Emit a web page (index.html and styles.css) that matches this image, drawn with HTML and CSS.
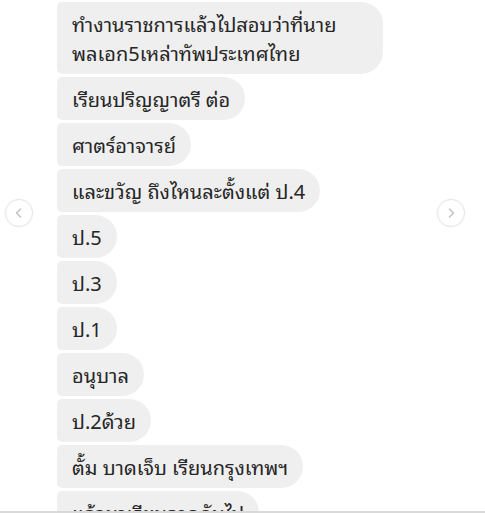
FILE: index.html
```html
<!DOCTYPE html>
<html lang="th">
<head>
<meta charset="utf-8">
<link rel="stylesheet" href="styles.css">
</head>
<body>
<div class="thread">
  <div class="bubble bubble-wide">ทำงานราชการแล้วไปสอบว่าที่นาย<br>พลเอก5เหล่าทัพประเทศไทย</div>
  <div class="bubble">เรียนปริญญาตรี ต่อ</div>
  <div class="bubble">ศาตร์อาจารย์</div>
  <div class="bubble">และขวัญ ถึงไหนละตั้งแต่ ป.4</div>
  <div class="bubble">ป.5</div>
  <div class="bubble">ป.3</div>
  <div class="bubble">ป.1</div>
  <div class="bubble">อนุบาล</div>
  <div class="bubble">ป.2ด้วย</div>
  <div class="bubble">ตั้ม บาดเจ็บ เรียนกรุงเทพฯ</div>
  <div class="bubble">แล้วมาเรียนลาดกับไป</div>
</div>
<button class="nav nav-prev" aria-label="Previous">
  <svg viewBox="0 0 26 26" width="26" height="26"><path d="M14.5 9 L10.5 13 L14.5 17" fill="none" stroke="#c4c4c4" stroke-width="1.6" stroke-linecap="round" stroke-linejoin="round"/></svg>
</button>
<button class="nav nav-next" aria-label="Next">
  <svg viewBox="0 0 26 26" width="26" height="26"><path d="M11.5 9 L15.5 13 L11.5 17" fill="none" stroke="#c4c4c4" stroke-width="1.6" stroke-linecap="round" stroke-linejoin="round"/></svg>
</button>
<div class="bottom-line"></div>
</body>
</html>
```

FILE: styles.css
```css
html, body {
  margin: 0;
  padding: 0;
  background: #ffffff;
  overflow: hidden;
  height: 513px;
}
body {
  font-family: "Noto Sans Thai Looped", "Noto Looped Thai", "Noto Sans Thai", "Noto Sans", "Liberation Sans", sans-serif;
  color: #262626;
  position: relative;
}
.thread {
  display: flex;
  flex-direction: column;
  align-items: flex-start;
  gap: 3px;
  padding: 2px 0 0 57px;
}
.bubble {
  background: #efefef;
  font-size: 20px;
  line-height: 29px;
  padding: 7px 15px;
  border-radius: 5px 22px 22px 5px;
  white-space: nowrap;
}
.bubble-wide {
  width: 296px;
}
.nav {
  position: absolute;
  top: 199px;
  width: 28px;
  height: 28px;
  padding: 0;
  border: 1.5px solid #e6e6e6;
  border-radius: 50%;
  background: #ffffff;
  display: flex;
  align-items: center;
  justify-content: center;
  box-shadow: 0 0 2px rgba(0, 0, 0, 0.06);
}
.nav-prev { left: 5px; }
.nav-next { left: 437px; }
.bottom-line {
  position: absolute;
  left: 0;
  right: 0;
  top: 511px;
  height: 2px;
  background: #d9d9d9;
}
```
